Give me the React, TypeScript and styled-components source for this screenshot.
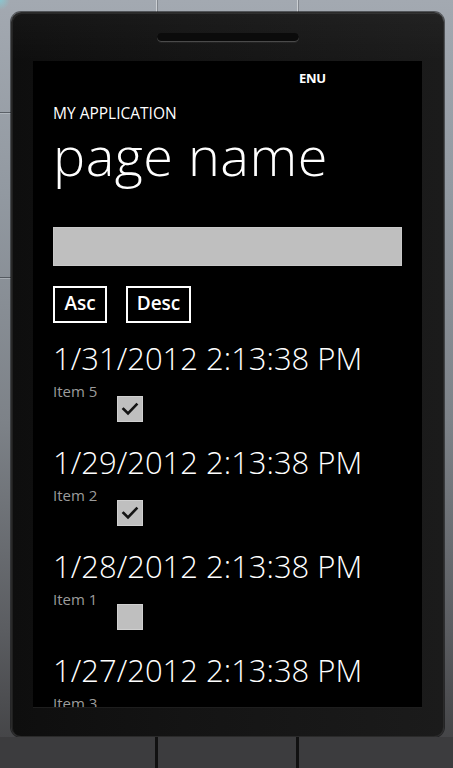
import React from "react";
import styled, { createGlobalStyle } from "styled-components";

const Global = createGlobalStyle`
  html, body { margin: 0; padding: 0; background: #3e3e40; }
  body { font-family: "Open Sans", "Noto Sans", sans-serif; }
  * { box-sizing: border-box; }
`;

const Stage = styled.div`
  width: 453px;
  height: 768px;
  display: flex;
  flex-direction: column;
  overflow: hidden;
  background: linear-gradient(180deg, #a3a9b1 0%, #9299a1 25%, #7d8288 55%, #5b5d61 82%, #3f3f41 100%);
`;

const TopStrip = styled.div`
  height: 12px;
  flex: none;
  background-image:
    linear-gradient(90deg, transparent 156px, rgba(255,255,255,0.45) 156px, rgba(255,255,255,0.45) 157px, rgba(0,0,0,0.2) 157px, rgba(0,0,0,0.2) 158px, transparent 158px,
      transparent 297px, rgba(255,255,255,0.45) 297px, rgba(255,255,255,0.45) 298px, rgba(0,0,0,0.2) 298px, rgba(0,0,0,0.2) 299px, transparent 299px),
    radial-gradient(circle at 0 0, rgba(120,220,230,0.55), transparent 10px);
`;

const PhoneRow = styled.div`
  height: 725px;
  flex: none;
  display: flex;
  padding: 0 9px 0 11px;
  background-image: linear-gradient(180deg, transparent 100px, rgba(40,44,50,0.55) 100px, rgba(40,44,50,0.55) 101px, rgba(220,225,230,0.35) 101px, rgba(220,225,230,0.35) 102px, transparent 102px,
    transparent 265px, rgba(40,44,50,0.55) 265px, rgba(40,44,50,0.55) 266px, rgba(220,225,230,0.35) 266px, rgba(220,225,230,0.35) 267px, transparent 267px);
  background-size: 11px 100%;
  background-repeat: no-repeat;
`;

const Phone = styled.div`
  width: 433px;
  height: 725px;
  display: flex;
  flex-direction: column;
  border-radius: 10px;
  border: 1px solid #2a2a2a;
  box-shadow: 0 0 0 1px rgba(0,0,0,0.5), inset 1px 1px 0 rgba(255,255,255,0.08);
  background: linear-gradient(90deg, #0e0e0e 0%, #141414 40%, #1b1b1b 100%);
`;

const Earpiece = styled.div`
  height: 48px;
  flex: none;
  padding: 20px 0 0 145px;
  background: linear-gradient(180deg, rgba(255,255,255,0.03), transparent);
`;

const Speaker = styled.div`
  width: 142px;
  height: 9px;
  border-radius: 5px;
  background: #0b0b0b;
  box-shadow: inset 0 -1px 0 #4a4a4a, 0 1px 0 rgba(255,255,255,0.05);
`;

const Screen = styled.div`
  height: 647px;
  margin: 0 21px;
  background: #000;
  overflow: hidden;
  display: flex;
  flex-direction: column;
  padding: 0 20px;
  border-bottom: 1px solid #1e1e1e;
  color: #fff;
`;

const StatusBar = styled.div`
  height: 42px;
  flex: none;
  padding: 5px 0 0 246px;
`;

const StatusText = styled.span`
  font-family: "Open Sans", sans-serif;
  font-weight: 700;
  font-size: 13px;
  line-height: 16px;
  color: #fff;
  letter-spacing: -0.3px;
`;

const AppTitle = styled.div`
  font-size: 15.5px;
  line-height: 20px;
  font-weight: 400;
  color: #fff;
`;

const PageTitle = styled.div`
  font-size: 54px;
  line-height: 64px;
  font-weight: 300;
  color: #fff;
  letter-spacing: 0.5px;
`;

const TextBox = styled.div`
  margin-top: 40px;
  height: 39px;
  flex: none;
  background: #bfbfbf;
  border: 1px solid #c8c8c8;
`;

const ButtonRow = styled.div`
  margin-top: 20px;
  display: flex;
  gap: 19px;
`;

const SortButton = styled.button<{ $w: number }>`
  width: ${(p) => p.$w}px;
  height: 37px;
  border: 2px solid #fff;
  background: transparent;
  color: #fff;
  font-family: "Open Sans", sans-serif;
  font-weight: 600;
  font-size: 19px;
  line-height: 1;
  padding: 0 0 2px;
  display: flex;
  align-items: center;
  justify-content: center;
`;

const List = styled.div`
  margin-top: 15px;
  display: flex;
  flex-direction: column;
`;

const Item = styled.div`
  display: flex;
  flex-direction: column;
  margin-bottom: 20px;
  flex: none;
`;

const DateText = styled.div`
  font-size: 31px;
  line-height: 40px;
  font-weight: 300;
  color: #fff;
  white-space: nowrap;
`;

const ItemLabel = styled.div`
  margin-top: 4px;
  font-size: 15px;
  line-height: 18px;
  color: #9c9c9c;
`;

const Check = styled.div`
  margin: -4px 0 0 64px;
  width: 26px;
  height: 26px;
  background: #bfbfbf;
  border: 1px solid #d0d0d0;
  display: flex;
  align-items: center;
  justify-content: center;
`;

const PhoneBottom = styled.div`
  flex: 1;
`;

const BottomStrip = styled.div`
  height: 31px;
  flex: none;
  background-color: #3c3c3e;
  background-image: linear-gradient(90deg, transparent 155px, #111 155px, #111 158px, transparent 158px,
    transparent 296px, #111 296px, #111 299px, transparent 299px);
`;

const items = [
  { date: "1/31/2012 2:13:38 PM", label: "Item 5", checked: true },
  { date: "1/29/2012 2:13:38 PM", label: "Item 2", checked: true },
  { date: "1/28/2012 2:13:38 PM", label: "Item 1", checked: false },
  { date: "1/27/2012 2:13:38 PM", label: "Item 3", checked: false },
];

const CheckMark = () => (
  <svg width="20" height="20" viewBox="0 0 20 20">
    <polyline points="3.5,10 8,14.5 16.5,5.5" fill="none" stroke="#141414" strokeWidth="2.6" strokeLinecap="square" />
  </svg>
);

export default function App() {
  return (
    <>
      <Global />
      <Stage>
        <TopStrip />
        <PhoneRow>
          <Phone>
            <Earpiece>
              <Speaker />
            </Earpiece>
            <Screen>
              <StatusBar>
                <StatusText>ENU</StatusText>
              </StatusBar>
              <AppTitle>MY APPLICATION</AppTitle>
              <PageTitle>page name</PageTitle>
              <TextBox />
              <ButtonRow>
                <SortButton $w={54}>Asc</SortButton>
                <SortButton $w={65}>Desc</SortButton>
              </ButtonRow>
              <List>
                {items.map((it) => (
                  <Item key={it.label}>
                    <DateText>{it.date}</DateText>
                    <ItemLabel>{it.label}</ItemLabel>
                    <Check>{it.checked && <CheckMark />}</Check>
                  </Item>
                ))}
              </List>
            </Screen>
            <PhoneBottom />
          </Phone>
        </PhoneRow>
        <BottomStrip />
      </Stage>
    </>
  );
}
